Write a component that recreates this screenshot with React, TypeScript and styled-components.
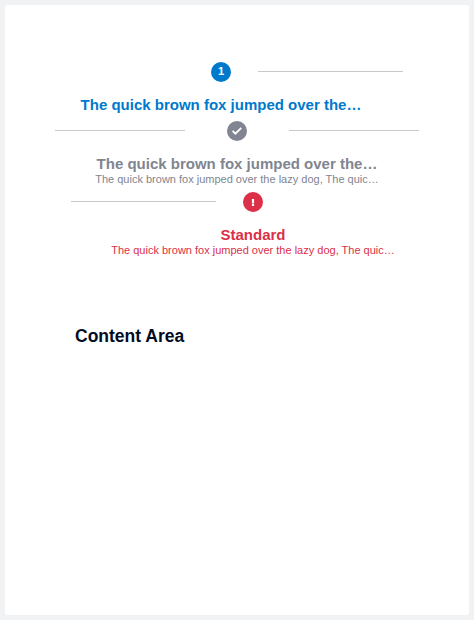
import React from 'react';
import styled, { createGlobalStyle } from 'styled-components';

type Tone = 'active' | 'complete' | 'error';

const tones: Record<Tone, string> = {
  active: '#0079cc',
  complete: '#808591',
  error: '#db3047',
};

const GlobalStyle = createGlobalStyle`
  * { box-sizing: border-box; }
  body {
    margin: 0;
    background: #f1f2f4;
    font-family: "Liberation Sans", Arial, sans-serif;
  }
`;

const Page = styled.div`
  height: 620px;
  padding: 5px;
`;

const Card = styled.main`
  height: 610px;
  padding-top: 57px;
  background: #fff;
  border-radius: 2px;
`;

const Stepper = styled.ol`
  display: flex;
  flex-direction: column;
  margin: 0;
  padding: 0;
  list-style: none;
`;

const StepItem = styled.li<{ $tone: Tone; $start: number; $height: number }>`
  width: 364px;
  height: ${(p) => p.$height}px;
  margin-left: ${(p) => p.$start}px;
  color: ${(p) => tones[p.$tone]};
  text-align: center;
`;

const Track = styled.div<{ $gap: number }>`
  display: grid;
  grid-template-columns: 1fr 20px 1fr;
  column-gap: ${(p) => p.$gap}px;
  align-items: center;
  height: 20px;
`;

const Line = styled.span<{ $hidden?: boolean }>`
  height: 1px;
  margin-top: -1px;
  background: ${(p) => (p.$hidden ? 'transparent' : '#c8c9cc')};
`;

const Marker = styled.span`
  display: flex;
  align-items: center;
  justify-content: center;
  width: 20px;
  height: 20px;
  border-radius: 50%;
  background: currentColor;
`;

const StepNumber = styled.span`
  padding-bottom: 2px;
  color: #fff;
  font-size: 11px;
  font-weight: 700;
  line-height: 18px;
`;

const Title = styled.div`
  margin-top: 15px;
  font-size: 15px;
  font-weight: 700;
  line-height: 16px;
  white-space: nowrap;
`;

const Description = styled.div`
  font-size: 11px;
  line-height: 15px;
  white-space: nowrap;
`;

const Heading = styled.h2`
  margin: 62px 0 0 70px;
  color: #020c23;
  font-size: 17.5px;
  font-weight: 700;
  line-height: 22px;
`;

const CheckIcon = () => (
  <svg width="20" height="20" viewBox="0 0 20 20" fill="none" aria-hidden="true">
    <path d="M5.6 9.9 8.4 12.7 14.3 6.9" stroke="#fff" strokeWidth="1.8" />
  </svg>
);

const AlertIcon = () => (
  <svg width="20" height="20" viewBox="0 0 20 20" fill="#fff" aria-hidden="true">
    <path d="M8.9 7h2.2v4.6H8.9zM8.9 12.1h2.2V14H8.9z" />
  </svg>
);

interface StepProps {
  tone: Tone;
  start: number;
  height: number;
  gap: number;
  before?: boolean;
  after?: boolean;
  marker: React.ReactNode;
  title: string;
  description?: string;
}

const Step = ({ tone, start, height, gap, before, after, marker, title, description }: StepProps) => (
  <StepItem $tone={tone} $start={start} $height={height}>
    <Track $gap={gap}>
      <Line $hidden={!before} />
      <Marker>{marker}</Marker>
      <Line $hidden={!after} />
    </Track>
    <Title>{title}</Title>
    {description && <Description>{description}</Description>}
  </StepItem>
);

export default function App() {
  return (
    <>
      <GlobalStyle />
      <Page>
        <Card>
          <Stepper>
            <Step
              tone="active"
              start={34}
              height={59}
              gap={27}
              after
              marker={<StepNumber>1</StepNumber>}
              title="The quick brown fox jumped over the…"
            />
            <Step
              tone="complete"
              start={50}
              height={71}
              gap={42}
              before
              after
              marker={<CheckIcon />}
              title="The quick brown fox jumped over the…"
              description="The quick brown fox jumped over the lazy dog, The quic…"
            />
            <Step
              tone="error"
              start={66}
              height={71}
              gap={27}
              before
              marker={<AlertIcon />}
              title="Standard"
              description="The quick brown fox jumped over the lazy dog, The quic…"
            />
          </Stepper>
          <Heading>Content Area</Heading>
        </Card>
      </Page>
    </>
  );
}
